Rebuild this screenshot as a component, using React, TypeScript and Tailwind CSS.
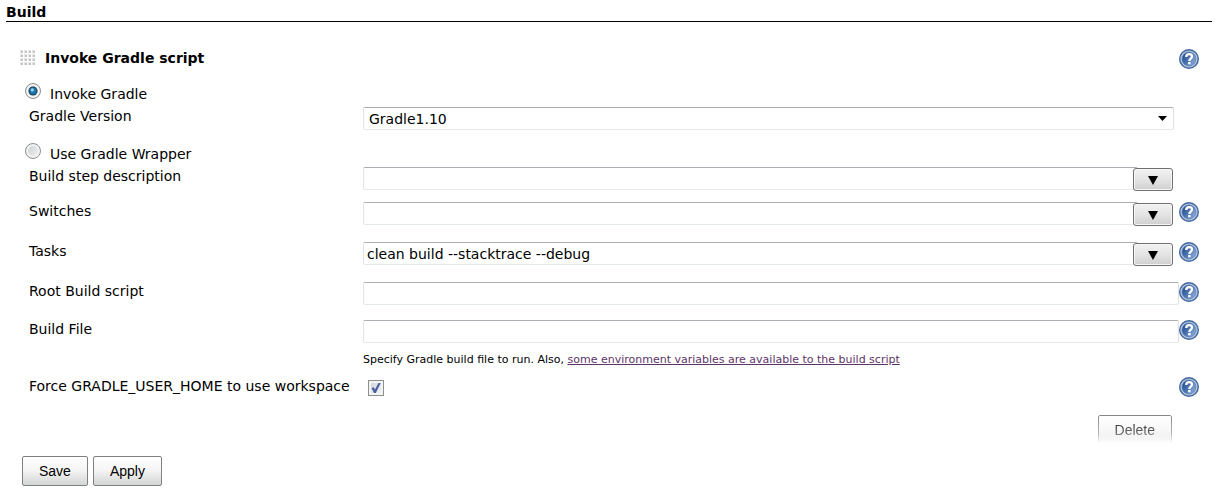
import { useId, useState } from "react";
import type { ReactNode } from "react";

const fieldClass =
  "h-[23px] min-w-0 flex-1 rounded-[2px] border border-t-[#abadb3] border-r-[#dbdfe6] border-b-[#e3e9ef] border-l-[#e2e3ea] bg-white px-[3px] text-[14px] leading-[18px] text-black outline-none";

function HelpButton({ topic }: { topic: string }) {
  const id = useId();
  return (
    <button type="button" aria-label={`Help for ${topic}`} className="block size-5 shrink-0">
      <svg viewBox="0 0 20 20" className="block size-5" aria-hidden="true">
        <defs>
          <linearGradient id={id} x1="0" y1="0.2" x2="1" y2="0.8">
            <stop offset="0" stopColor="#1f4a8c" />
            <stop offset="0.5" stopColor="#4f78b3" />
            <stop offset="1" stopColor="#8fb0dc" />
          </linearGradient>
        </defs>
        <circle cx="10" cy="10" r="9.3" fill="#b4c7e2" stroke="#43679f" strokeWidth="1.4" />
        <circle cx="10" cy="10" r="7" fill={`url(#${id})`} stroke="#5578ad" strokeWidth="0.6" />
        <path
          d="M7.200 8C7.200 6 8.400 5.200 10.100 5.200c1.900 0 2.900 1 2.900 2.300 0 2-2.600 2.100-2.600 4.400"
          fill="none"
          stroke="#fff"
          strokeWidth="2.3"
        />
        <rect x="9.1" y="13" width="2.500" height="2.300" fill="#fff" />
      </svg>
    </button>
  );
}

function Row({
  label,
  htmlFor,
  help,
  className,
  children,
}: {
  label: string;
  htmlFor: string;
  help?: boolean;
  className: string;
  children: ReactNode;
}) {
  return (
    <div className={`flex items-start pl-[23px] pr-[13px] ${className}`}>
      <label htmlFor={htmlFor} className="w-[334px] shrink-0 whitespace-nowrap leading-[18px]">
        {label}
      </label>
      <div className="flex min-w-0 flex-1 items-start">{children}</div>
      {help ? <HelpButton topic={label} /> : <div className="w-5 shrink-0" />}
    </div>
  );
}

function ExpandableInput({ id, defaultValue }: { id: string; defaultValue?: string }) {
  return (
    <>
      <input id={id} type="text" defaultValue={defaultValue} className={fieldClass} />
      <button
        type="button"
        aria-label="Expand to multiple lines"
        className="relative mt-px mr-[6px] -ml-[5px] flex h-[23px] w-10 shrink-0 items-center justify-center rounded-[3px] border border-[#707070] bg-linear-to-b from-[#f2f2f2] from-0% via-[#e4e4e4] via-50% to-[#cfcfcf] to-100% shadow-[inset_0_0_0_1px_#f6f6f6]"
      >
        <svg viewBox="0 0 10 9" className="mt-px h-[9px] w-[10px]" aria-hidden="true">
          <path d="M0 0h10L5 9z" fill="#000" />
        </svg>
      </button>
    </>
  );
}

function ModeRadio({
  label,
  checked,
  onSelect,
}: {
  label: string;
  checked: boolean;
  onSelect: () => void;
}) {
  return (
    <label className="flex h-[25px] items-start pl-[19px]">
      <span className="relative mt-px mr-[9px] block size-4 shrink-0">
        <input
          type="radio"
          name="gradle-mode"
          checked={checked}
          onChange={onSelect}
          className="block size-4 appearance-none rounded-full border border-[#8e8f8f] bg-linear-to-br from-[#c9cccf] to-[#f4f4f4] shadow-[inset_0_0_0_2px_#f4f4f4]"
        />
        {checked && (
          <svg
            viewBox="0 0 16 16"
            className="pointer-events-none absolute inset-0 size-4"
            aria-hidden="true"
          >
            <circle cx="8" cy="8" r="4.500" fill="#1d3f5e" />
            <circle cx="8" cy="8" r="3.500" fill="#1c75a8" />
            <circle cx="7.300" cy="6.900" r="1.700" fill="#8fd6ef" />
          </svg>
        )}
      </span>
      <span className="mt-[3px] leading-[18px]">{label}</span>
    </label>
  );
}

function DragHandle() {
  const steps = [0, 1, 2, 3];
  return (
    <svg viewBox="0 0 15 16" className="h-4 w-[15px] shrink-0" aria-hidden="true">
      {steps.map((row) =>
        steps.map((col) => (
          <g key={`${row}-${col}`}>
            <rect x={col * 4} y={row * 4} width="3" height="3" fill="#e4e4e4" />
            <rect x={col * 4 + 1} y={row * 4 + 1} width="2" height="2" fill="#c4c4c4" />
          </g>
        )),
      )}
    </svg>
  );
}

const buttonClass =
  "h-[30px] rounded-[2px] border border-[#808080] bg-linear-to-b from-white via-[#f4f4f4] to-[#d3d4d5] px-4 font-['Liberation_Sans',Arial,sans-serif] text-[14px] leading-[18px] text-black";

export default function App() {
  const [mode, setMode] = useState("gradle");
  const [forceHome, setForceHome] = useState(true);

  return (
    <form
      onSubmit={(event) => event.preventDefault()}
      className="bg-white pt-1 pr-[13px] pl-[6px] font-['DejaVu_Sans',Verdana,sans-serif] text-[14px] text-black"
    >
      <h1 className="border-b border-black text-[14px] leading-[17px] font-bold">Build</h1>

      <div className="mt-[27px] flex h-[33px] items-start pr-[13px] pl-[14px]">
        <div className="flex flex-1 items-center gap-[10px]">
          <DragHandle />
          <h2 className="text-[14px] leading-[18px] font-bold">Invoke Gradle script</h2>
        </div>
        <HelpButton topic="Invoke Gradle script" />
      </div>

      <ModeRadio label="Invoke Gradle" checked={mode === "gradle"} onSelect={() => setMode("gradle")} />
      <Row label="Gradle Version" htmlFor="version" className="h-[35px]">
        <div className="relative mr-[5px] flex flex-1">
          <select id="version" className={`${fieldClass} appearance-none pl-[5px]`}>
            <option>Gradle1.10</option>
          </select>
          <svg
            viewBox="0 0 9 5"
            className="pointer-events-none absolute top-[9px] right-[7px] h-[5px] w-[9px]"
            aria-hidden="true"
          >
            <path d="M0 0h9L4.500 5z" fill="#000" />
          </svg>
        </div>
      </Row>

      <ModeRadio
        label="Use Gradle Wrapper"
        checked={mode === "wrapper"}
        onSelect={() => setMode("wrapper")}
      />
      <Row label="Build step description" htmlFor="description" className="h-[35px]">
        <ExpandableInput id="description" />
      </Row>
      <Row label="Switches" htmlFor="switches" help className="h-10">
        <ExpandableInput id="switches" />
      </Row>
      <Row label="Tasks" htmlFor="tasks" help className="h-10">
        <ExpandableInput id="tasks" defaultValue="clean build --stacktrace --debug" />
      </Row>
      <Row label="Root Build script" htmlFor="root-script" help className="h-[38px]">
        <input id="root-script" type="text" className={fieldClass} />
      </Row>
      <Row label="Build File" htmlFor="build-file" help className="h-[33px]">
        <input id="build-file" type="text" className={fieldClass} />
      </Row>
      <p className="mb-[10px] pl-[357px] text-[11px] leading-[14px]">
        Specify Gradle build file to run. Also,{" "}
        <a href="#environment" className="text-[#5c3566] underline">
          some environment variables are available to the build script
        </a>
      </p>
      <Row
        label="Force GRADLE_USER_HOME to use workspace"
        htmlFor="force-home"
        help
        className="h-[38px]"
      >
        <span className="relative mt-[3px] ml-[5px] block size-4">
          <input
            id="force-home"
            type="checkbox"
            checked={forceHome}
            onChange={() => setForceHome(!forceHome)}
            className="block size-4 appearance-none border border-[#8e8f8f] bg-linear-to-br from-[#cfd3d9] to-[#f6f6f6] shadow-[inset_0_0_0_2px_#f4f4f4]"
          />
          {forceHome && (
            <svg
              viewBox="0 0 16 16"
              className="pointer-events-none absolute inset-0 size-4"
              aria-hidden="true"
            >
              <path d="M3.500 8L5.700 7.200L7 9.500L10.500 3L12.700 3L7.800 13L6 13z" fill="#4a5f9f" />
            </svg>
          )}
        </span>
      </Row>

      <div className="flex justify-end pr-10">
        <button
          type="button"
          className={`${buttonClass} [mask-image:linear-gradient(to_bottom,rgba(0,0,0,0.95)_0,rgba(0,0,0,0.6)_60%,transparent_95%)]`}
        >
          Delete
        </button>
      </div>
      <div className="mt-[11px] flex gap-[5px] pl-4">
        <button type="submit" className={buttonClass}>
          Save
        </button>
        <button type="button" className={buttonClass}>
          Apply
        </button>
      </div>
    </form>
  );
}
